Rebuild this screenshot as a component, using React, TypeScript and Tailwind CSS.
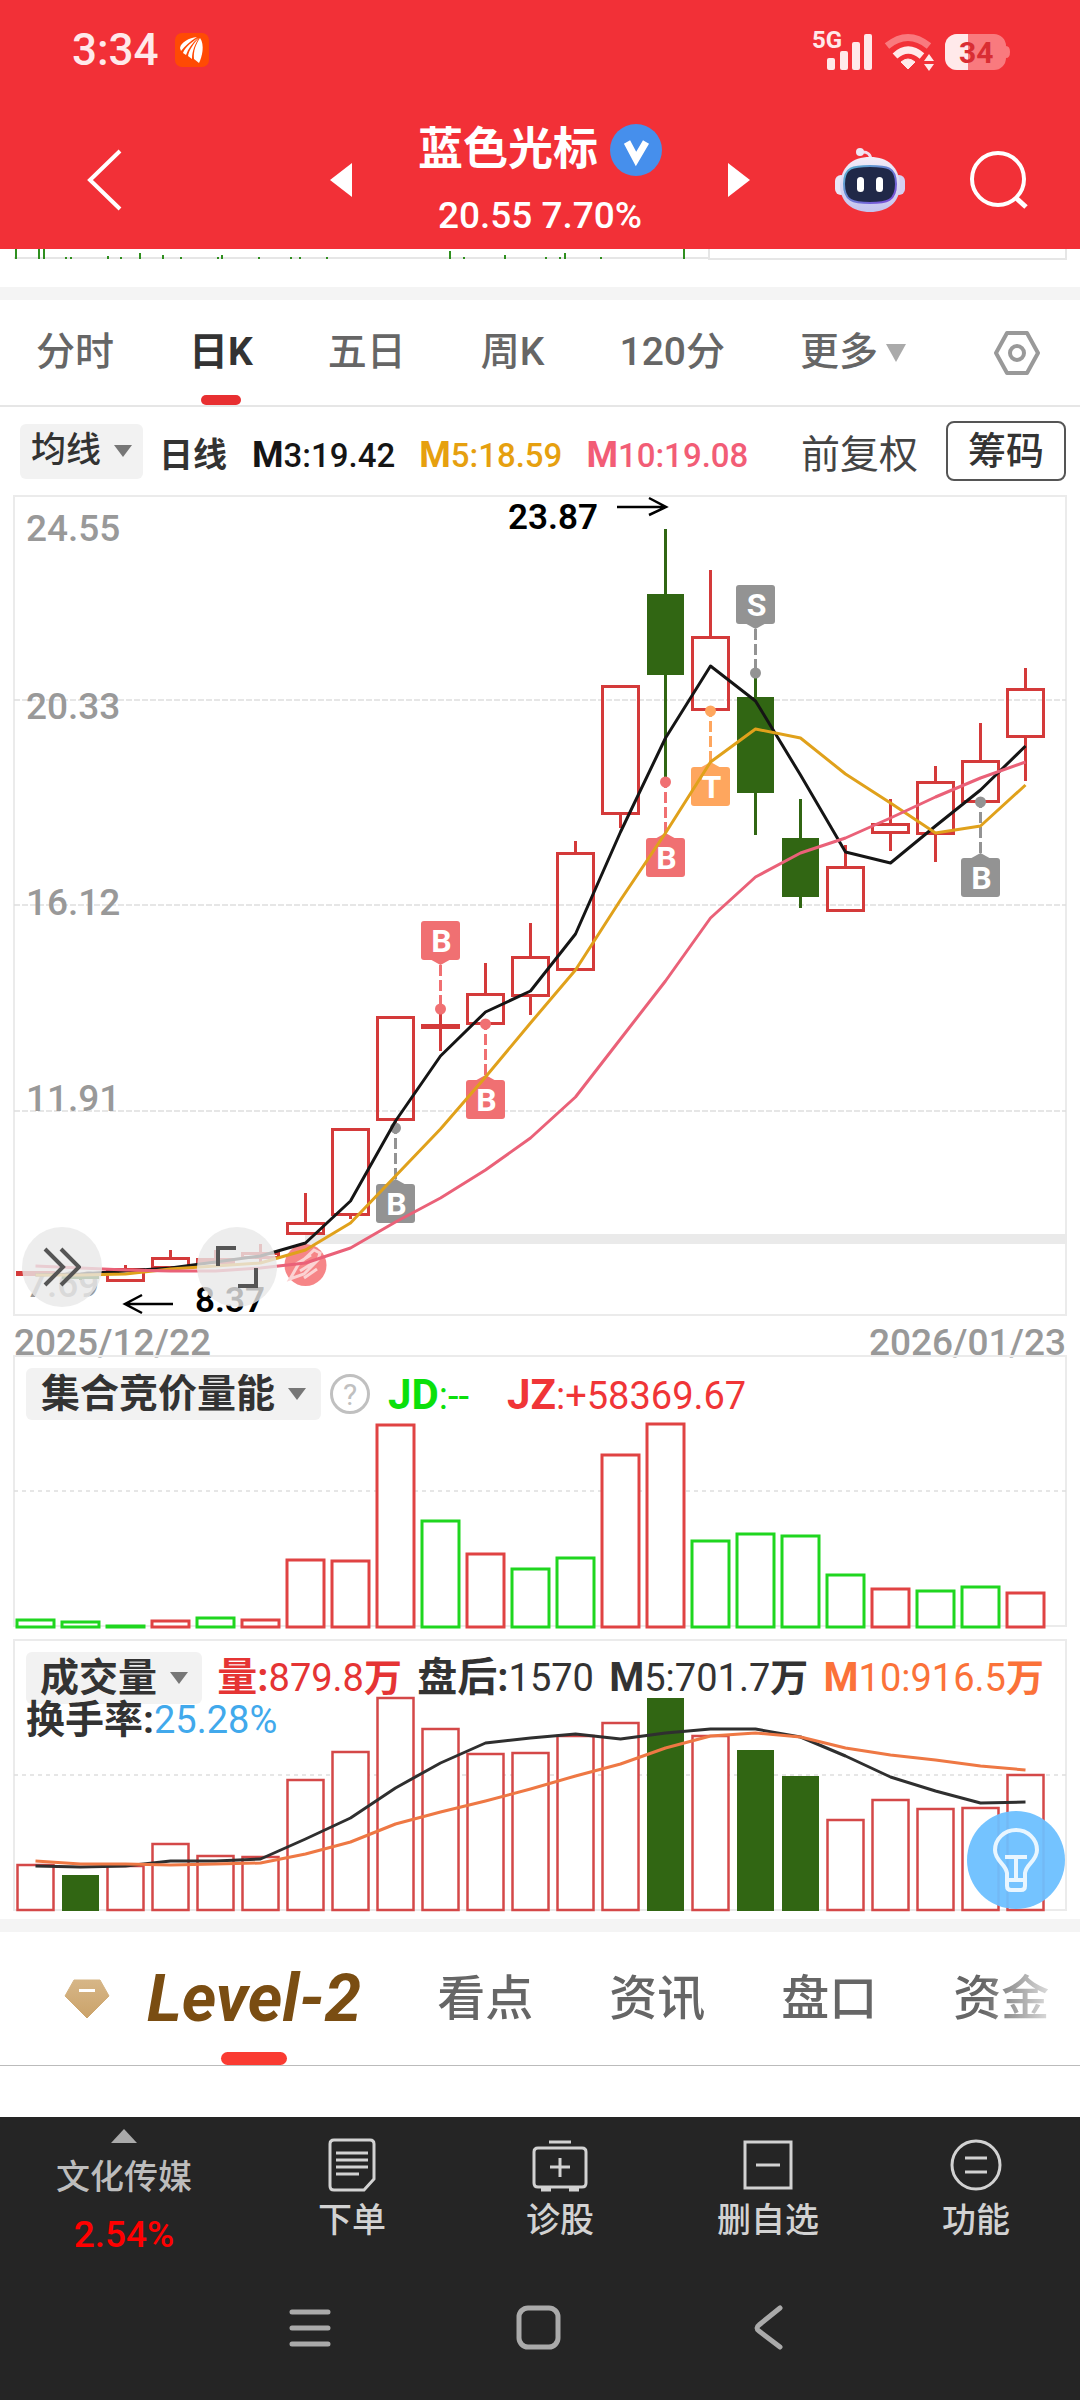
import { ReactNode, useState } from "react";
import clsx from "clsx";

type Candle = {
    ohlc: [number, number, number, number]; // wick top, body top, body bottom, wick bottom
    down?: boolean;
};

type Marker = {
    index: number;
    text: string;
    color: string;
    boxTop: number;
    dot: number;
};

const STEP = 45;
const RED = "#d43a3a";
const GREEN = "#316613";
const centerX = (index: number) => 35.5 + index * STEP;

const candles: Candle[] = [
    { ohlc: [776, 776, 781, 781] },
    { ohlc: [780, 781, 784, 785], down: true },
    { ohlc: [770, 773, 787, 787] },
    { ohlc: [755, 762, 774, 774] },
    { ohlc: [755, 763, 769, 769] },
    { ohlc: [749, 757, 764, 767] },
    { ohlc: [698, 727, 740, 740] },
    { ohlc: [633, 633, 721, 724] },
    { ohlc: [521, 521, 626, 634] },
    { ohlc: [514, 529, 534, 556] },
    { ohlc: [468, 498, 530, 530] },
    { ohlc: [428, 461, 502, 520] },
    { ohlc: [346, 357, 476, 476] },
    { ohlc: [190, 190, 320, 333] },
    { ohlc: [34, 99, 180, 286], down: true },
    { ohlc: [75, 141, 216, 216] },
    { ohlc: [177, 202, 298, 340], down: true },
    { ohlc: [304, 343, 402, 413], down: true },
    { ohlc: [350, 371, 417, 417] },
    { ohlc: [304, 328, 339, 356] },
    { ohlc: [271, 286, 340, 367] },
    { ohlc: [228, 265, 308, 308] },
    { ohlc: [173, 193, 243, 286] },
];

const ma3 = [780, 779, 776, 773, 767, 761, 748, 706, 626, 561, 517, 496, 439, 337, 243, 171, 206, 280, 357, 368, 331, 295, 251];
const ma5 = [780, 780, 779, 774, 771, 768, 755, 728, 681, 634, 582, 528, 475, 405, 338, 267, 234, 243, 279, 308, 338, 331, 290];
const ma10 = [771, 773, 775, 776, 776, 773, 768, 753, 727, 703, 675, 643, 602, 544, 486, 423, 382, 358, 343, 323, 302, 283, 267];

const markers: Marker[] = [
    { index: 8, text: "B", color: "#939393", boxTop: 689, dot: 633 },
    { index: 9, text: "B", color: "#f07072", boxTop: 426, dot: 514 },
    { index: 10, text: "B", color: "#f07072", boxTop: 585, dot: 529 },
    { index: 14, text: "B", color: "#f07072", boxTop: 343, dot: 287 },
    { index: 15, text: "T", color: "#fea65e", boxTop: 272, dot: 216 },
    { index: 16, text: "S", color: "#939393", boxTop: 90, dot: 178 },
    { index: 21, text: "B", color: "#939393", boxTop: 363, dot: 307 },
];

const priceLabels = [
    { text: "24.55", y: 46 },
    { text: "20.33", y: 224 },
    { text: "16.12", y: 420 },
    { text: "11.91", y: 616 },
    { text: "7.69", y: 802 },
];

const auctionTops = [265, 267, 271, 266, 263, 265, 205, 206, 70, 166, 199, 214, 203, 100, 69, 186, 179, 181, 220, 234, 236, 232, 238];
const auctionGreen = [0, 1, 2, 4, 9, 11, 12, 15, 16, 17, 18, 20, 21];

const volumeTops = [226, 236, 227, 205, 217, 218, 141, 113, 59, 90, 115, 114, 97, 84, 59, 97, 111, 137, 181, 161, 170, 169, 136];
const volumeDown = [1, 14, 16, 17];
const volumeMa5 = [227, 228, 227, 222, 222, 220, 200, 179, 149, 124, 104, 99, 95, 100, 94, 90, 90, 98, 117, 138, 152, 164, 163];
const volumeMa10 = [222, 225, 225, 226, 225, 224, 215, 203, 185, 173, 162, 150, 137, 125, 109, 97, 94, 98, 109, 116, 121, 127, 131];

// [x, height] of the ticks still visible under the header
const ticks = [
    [15, 10], [38, 10], [43, 10], [65, 2], [70, 2], [107, 3], [120, 2], [139, 6], [162, 4], [180, 2], [217, 2], [221, 4],
    [258, 2], [290, 2], [299, 2], [326, 2], [449, 8], [463, 2], [504, 4], [545, 2], [559, 2], [564, 6], [600, 2], [683, 10],
];

const toPoints = (values: number[]) => values.map((y, i) => `${centerX(i)},${y}`).join(" ");

function MaLine({ values, color }: { values: number[]; color: string }) {
    return <polyline points={toPoints(values)} fill="none" stroke={color} strokeWidth="3" strokeLinejoin="round" />;
}

function Frame({ bottom, grid, dash }: { bottom: number; grid: number[]; dash: string }) {
    return (
        <g fill="none" stroke="#ebebeb" strokeWidth="2">
            <rect x="14" y="1" width="1052" height={bottom - 1} />
            {grid.map((y) => (
                <line key={y} x1="14" x2="1066" y1={y} y2={y} strokeDasharray={dash} strokeWidth="1.5" stroke="#dedede" />
            ))}
        </g>
    );
}

function CandleShape({ candle, index }: { candle: Candle; index: number }) {
    const x = centerX(index);
    const [high, top, bottom, low] = candle.ohlc;
    if (candle.down) {
        return (
            <g fill={GREEN}>
                <rect x={x - 1.5} y={high} width="3" height={low - high} />
                <rect x={x - 18.5} y={top} width="37" height={bottom - top} />
            </g>
        );
    }
    const flat = bottom - top < 6;
    return (
        <g fill={RED}>
            <rect x={x - 1.5} y={high} width="3" height={top - high} />
            <rect x={x - 1.5} y={bottom} width="3" height={low - bottom} />
            {flat ? (
                <rect x={x - 19.5} y={top} width="39" height={bottom - top} />
            ) : (
                <rect x={x - 18} y={top + 1.5} width="36" height={bottom - top - 3} fill="none" stroke={RED} strokeWidth="3" />
            )}
        </g>
    );
}

function MarkerShape({ marker }: { marker: Marker }) {
    const x = centerX(marker.index);
    const above = marker.boxTop < marker.dot;
    const edge = above ? marker.boxTop + 39 : marker.boxTop;
    const tip = above ? edge + 5 : edge - 5;
    return (
        <g fill={marker.color}>
            <line x1={x} x2={x} y1={tip} y2={marker.dot} stroke={marker.color} strokeWidth="3" strokeDasharray="11 4" />
            <circle cx={x} cy={marker.dot} r="5.5" />
            <rect x={x - 19.5} y={marker.boxTop} width="39" height="39" rx="3" />
            <path d={`M${x - 9} ${edge}L${x} ${tip}L${x + 9} ${edge}Z`} />
            <text x={x + 1} y={marker.boxTop + 31} fill="#fff" fontSize="32" fontWeight="700" textAnchor="middle">
                {marker.text}
            </text>
        </g>
    );
}

function PriceChart() {
    return (
        <svg viewBox="0 0 1080 821" className="block w-full overflow-visible" role="img" aria-label="日K线图">
            <Frame bottom={820} grid={[205, 410, 616]} dash="6 2" />
            <rect x="305" y="739" width="762" height="10" fill="#eaeaea" />
            <g fill="#999" fontSize="37" fontWeight="500">
                {priceLabels.map((label) => (
                    <text key={label.text} x="26" y={label.y}>
                        {label.text}
                    </text>
                ))}
            </g>
            {candles.map((candle, i) => (
                <CandleShape key={i} candle={candle} index={i} />
            ))}
            {markers.map((marker) => (
                <MarkerShape key={marker.index} marker={marker} />
            ))}
            <g>
                <circle cx="305.5" cy="770" r="21" fill="#f68587" />
                <path d="M290 784l8-14 16-15 6 3-2 7-14 14zM296 769l15-9M300 776l16-10M304 783l13-9" fill="none" stroke="#fbd3d3" strokeWidth="3" />
            </g>
            <MaLine values={ma3} color="#151515" />
            <MaLine values={ma5} color="#e0a11b" />
            <MaLine values={ma10} color="#ea6178" />
            <g fill="none" stroke="#000" strokeWidth="2.5">
                <path d="M617 12H665M649 3L666 12L649 20" />
                <path d="M173 809H126M142 800L125 809L142 818" />
            </g>
            <g fill="#000" fontSize="35" fontWeight="600">
                <text x="508" y="34">23.87</text>
                <text x="195" y="817">8.37</text>
            </g>
        </svg>
    );
}

function AuctionChart() {
    return (
        <svg viewBox="0 0 1080 284" className="block w-full" role="img" aria-label="集合竞价量能">
            <Frame bottom={271} grid={[136]} dash="4 4" />
            {auctionTops.map((top, i) => (
                <rect
                    key={i}
                    x={centerX(i) - 18.5}
                    y={top}
                    width="37"
                    height={272 - top}
                    fill="#fff"
                    stroke={auctionGreen.includes(i) ? "#1fd61f" : "#e04343"}
                    strokeWidth="3"
                />
            ))}
        </svg>
    );
}

function VolumeChart() {
    return (
        <svg viewBox="0 0 1080 280" className="block w-full" role="img" aria-label="成交量">
            <Frame bottom={271} grid={[136]} dash="4 4" />
            {volumeTops.map((top, i) =>
                volumeDown.includes(i) ? (
                    <rect key={i} x={centerX(i) - 18.5} y={top} width="37" height={272 - top} fill={GREEN} />
                ) : (
                    <rect
                        key={i}
                        x={centerX(i) - 18}
                        y={top}
                        width="36"
                        height={271 - top}
                        fill="#fff"
                        stroke="#d44848"
                        strokeWidth="2.5"
                    />
                )
            )}
            <MaLine values={volumeMa5} color="#2f2f2f" />
            <MaLine values={volumeMa10} color="#ee7844" />
        </svg>
    );
}

function Dropdown({ label, bold, className }: { label: string; bold?: boolean; className?: string }) {
    return (
        <label className={clsx("flex shrink-0 items-center gap-3 rounded-md bg-[#f2f2f2] text-[#333]", className)}>
            <select aria-label={label} className={clsx("appearance-none bg-transparent outline-none", bold && "font-bold")}>
                <option>{label}</option>
            </select>
            <svg viewBox="0 0 18 12" className="h-3 w-[18px]" fill="#777">
                <path d="M0 0H18L9 12Z" />
            </svg>
        </label>
    );
}

function Value({ name, children, color, nameSize }: { name: string; children?: ReactNode; color: string; nameSize: string }) {
    return (
        <span className={clsx("shrink-0 whitespace-nowrap", color)}>
            <b className={nameSize}>{name}</b>
            {children}
        </span>
    );
}

function StatusBar() {
    return (
        <div className="flex h-[100px] items-center pr-[68px] pl-[72px] text-[#ffe9ea]">
            <span className="text-[44px] font-medium">3:34</span>
            <svg viewBox="0 0 34 34" className="ml-4 size-[34px]">
                <rect width="34" height="34" rx="7" fill="#ff4a04" />
                <g fill="#fff">
                    <path d="M22 4C14 5 6 9 5 15L6 18C10 13 15 8 22 4Z" />
                    <path d="M23 5C17 9 10 14 8 20L11 22C13 16 17 10 23 5Z" />
                    <path d="M24 5C19 10 14 17 13 23L17 26C17 18 20 11 24 5Z" />
                    <path d="M25 5C21 11 18 18 19 26L24 30C27 24 30 12 25 5Z" />
                </g>
            </svg>
            <svg viewBox="-4 -6 204 56" className="ml-auto h-14 w-[204px]" fill="currentColor">
                <text x="0" y="20" fontSize="24" fontWeight="700">
                    5G
                </text>
                <rect x="15" y="30" width="8" height="12" rx="2" />
                <rect x="28" y="23" width="8" height="19" rx="2" />
                <rect x="40" y="14" width="8" height="28" rx="2" />
                <rect x="52" y="6" width="8" height="36" rx="2" />
                <path d="M75 18Q96 1 117 18" fill="none" stroke="#f97a7e" strokeWidth="7" />
                <path d="M83 28Q96 16 110 28" fill="none" stroke="currentColor" strokeWidth="7" />
                <path d="M89 34Q96 28 103 34L96 41Z" stroke="currentColor" strokeWidth="1" />
                <path d="M112 33L117 26L122 33ZM112 36L117 43L122 36Z" />
                <path d="M145 6h37a12 12 0 0 1 12 12q4 0 4 6t-4 6a12 12 0 0 1-12 12h-37a12 12 0 0 1-12-12V18a12 12 0 0 1 12-12Z" fill="#f97a7e" />
                <path d="M156 6H145a12 12 0 0 0-12 12V30a12 12 0 0 0 12 12H156Z" />
                <text x="147" y="35" fontSize="30" fontWeight="700" fill="#d92d33">
                    34
                </text>
            </svg>
        </div>
    );
}

function RobotIcon() {
    return (
        <svg viewBox="0 0 70 66" className="h-[66px] w-[70px]">
            <defs>
                <linearGradient id="shell" x1="0" y1="0" x2="0" y2="1">
                    <stop offset="0" stopColor="#f3edf8" />
                    <stop offset="1" stopColor="#c3c3ee" />
                </linearGradient>
                <linearGradient id="rim" x1="0" y1="0" x2="1" y2="1">
                    <stop offset="0" stopColor="#59b5cf" />
                    <stop offset="1" stopColor="#7a45d8" />
                </linearGradient>
            </defs>
            <path d="M26 5q10-1 10 9" fill="none" stroke="#f3dcec" strokeWidth="3" />
            <circle cx="25" cy="5" r="4" fill="#eee6f4" />
            <rect x="0" y="28" width="12" height="20" rx="6" fill="#e9e6f7" />
            <rect x="58" y="28" width="12" height="20" rx="6" fill="#d5cff2" />
            <path d="M35 10C53 10 64 20 65 38C65 56 52 65 35 65S5 56 5 38C6 20 17 10 35 10Z" fill="url(#shell)" />
            <path d="M35 19C52 19 61 20 61 37S52 56 35 56S9 54 9 37S18 19 35 19Z" fill="#202848" stroke="url(#rim)" strokeWidth="2" />
            <rect x="22" y="30" width="7" height="15" rx="3.5" fill="#fff" />
            <rect x="41" y="30" width="7" height="15" rx="3.5" fill="#fff" />
        </svg>
    );
}

function StockHeader() {
    return (
        <header className="grid h-[149px] grid-cols-[1fr_420px_1fr] items-center pt-[10px] text-white">
            <div className="flex pl-[86px]">
                <button aria-label="返回">
                    <svg viewBox="0 0 36 62" className="h-[62px] w-9" fill="none" stroke="currentColor" strokeWidth="4">
                        <path d="M34 2L4 31L34 60" />
                    </svg>
                </button>
            </div>
            <div className="flex items-center justify-between">
                <button aria-label="上一只">
                    <svg viewBox="0 0 22 34" className="h-[34px] w-[22px]" fill="currentColor">
                        <path d="M22 0V34L0 17Z" />
                    </svg>
                </button>
                <div className="flex flex-col items-center">
                    <h1 className="flex items-center gap-3 text-[45px] leading-[52px] font-bold whitespace-nowrap">
                        蓝色光标
                        <svg viewBox="0 0 52 52" className="size-[52px]">
                            <circle cx="26" cy="26" r="26" fill="#468fec" />
                            <path d="M17 18L26 35L36 18" fill="none" stroke="#fff" strokeWidth="7" />
                        </svg>
                    </h1>
                    <p className="mt-5 text-[37px] leading-10 font-medium whitespace-nowrap">20.55 7.70%</p>
                </div>
                <button aria-label="下一只">
                    <svg viewBox="0 0 22 34" className="h-[34px] w-[22px]" fill="currentColor">
                        <path d="M0 0V34L22 17Z" />
                    </svg>
                </button>
            </div>
            <div className="flex items-center justify-end gap-[65px] pr-[52px]">
                <button aria-label="智能助手">
                    <RobotIcon />
                </button>
                <button aria-label="搜索">
                    <svg viewBox="0 0 58 58" className="size-[58px]" fill="none" stroke="currentColor" strokeWidth="4">
                        <circle cx="28" cy="28" r="26" />
                        <path d="M45 46L56 56" strokeWidth="5" />
                    </svg>
                </button>
            </div>
        </header>
    );
}

function TickStrip() {
    return (
        <svg viewBox="0 0 1080 38" className="block w-full">
            <rect x="14" y="8" width="695" height="2" fill="#e6e6e6" />
            <path d="M709 0V10H1066V0" fill="none" stroke="#e6e6e6" strokeWidth="2" />
            {ticks.map(([x, height]) => (
                <rect key={x} x={x} y={10 - height} width="2" height={height} fill="#2f8f1f" />
            ))}
        </svg>
    );
}

const periods = ["分时", "日K", "五日", "周K", "120分"];

function PeriodTabs() {
    const [active, setActive] = useState("日K");
    return (
        <nav className="flex h-[107px] items-stretch gap-[75px] border-b-2 border-[#e6e6e6] pr-[40px] pl-9 text-[39px] font-medium text-[#666]">
            {periods.map((period) => (
                <button
                    key={period}
                    onClick={() => setActive(period)}
                    className={clsx("relative whitespace-nowrap", active === period && "font-bold text-[#333]")}
                >
                    {period}
                    {active === period && (
                        <span className="absolute bottom-0 left-1/2 h-[10px] w-10 -translate-x-1/2 rounded-full bg-[#e82f31]" />
                    )}
                </button>
            ))}
            <button className="flex items-center gap-2 whitespace-nowrap" aria-haspopup="menu">
                更多
                <svg viewBox="0 0 20 18" className="h-[18px] w-5" fill="#aaa">
                    <path d="M0 0H20L10 18Z" />
                </svg>
            </button>
            <button aria-label="设置" className="ml-auto">
                <svg viewBox="0 0 46 44" className="h-11 w-[46px]" fill="none" stroke="#999" strokeWidth="4">
                    <path d="M13 2H33L44 22L33 42H13L2 22Z" strokeLinejoin="round" />
                    <circle cx="23" cy="22" r="7" />
                </svg>
            </button>
        </nav>
    );
}

function IndicatorBar() {
    return (
        <div className="flex h-[88px] items-center pr-[14px] pl-5 text-[33px] font-medium">
            <Dropdown label="均线" className="h-[55px] px-[11px] text-[35px]" />
            <div className="ml-4 flex grow items-center pt-2">
                <b className="text-[34px] text-[#333]">日线</b>
                <div className="ml-[25px] flex gap-6">
                    <Value name="M" nameSize="text-[36px]" color="text-[#151515]">3:19.42</Value>
                    <Value name="M" nameSize="text-[36px]" color="text-[#e6a00f]">5:18.59</Value>
                    <Value name="M" nameSize="text-[36px]" color="text-[#f25d76]">10:19.08</Value>
                </div>
                <button className="ml-auto text-[39px] font-normal whitespace-nowrap text-[#444]">前复权</button>
            </div>
            <button className="ml-7 h-[60px] rounded-lg border-2 border-[#555] px-5 text-[38px] whitespace-nowrap text-[#333]">筹码</button>
        </div>
    );
}

function PricePanel() {
    return (
        <section className="relative">
            <PriceChart />
            <button aria-label="展开" className="absolute bottom-[9px] left-[22px] flex size-20 items-center justify-center rounded-full bg-[#e8e8e8]/80">
                <svg viewBox="0 0 38 40" className="h-10 w-[38px]" fill="none" stroke="#555" strokeWidth="4">
                    <path d="M2 2L20 20L2 38M18 2L36 20L18 38" />
                </svg>
            </button>
            <button aria-label="全屏" className="absolute bottom-[9px] left-[197px] flex size-20 items-center justify-center rounded-full bg-[#e8e8e8]/80">
                <svg viewBox="0 0 42 42" className="size-[42px]" fill="none" stroke="#555" strokeWidth="4">
                    <path d="M2 20V2H20M40 22V40H22" />
                </svg>
            </button>
        </section>
    );
}

function AuctionPanel() {
    return (
        <section className="relative">
            <AuctionChart />
            <div className="absolute inset-x-0 top-[13px] flex h-[52px] items-center pl-[26px] text-[38px]">
                <Dropdown label="集合竞价量能" bold className="h-[52px] px-[15px] text-[39px]" />
                <button aria-label="说明" className="ml-[9px] flex size-10 items-center justify-center rounded-full border-3 border-[#c0c0c0] text-[30px] text-[#c0c0c0]">
                    ?
                </button>
                <span className="ml-[18px] flex gap-[38px]">
                    <Value name="JD" nameSize="text-[42px]" color="text-[#0be00b]">:--</Value>
                    <Value name="JZ" nameSize="text-[42px]" color="text-[#f03537]">:+58369.67</Value>
                </span>
            </div>
        </section>
    );
}

function VolumePanel() {
    return (
        <section className="relative">
            <VolumeChart />
            <div className="absolute inset-x-0 top-[13px] pr-[36px] pl-[26px] text-[38px] text-[#333]">
                <div className="flex h-[52px] items-center justify-between">
                    <Dropdown label="成交量" bold className="h-[52px] px-[14px] text-[39px]" />
                    <Value name="量:" nameSize="text-[40px]" color="text-[#e53434]">
                        879.8<b>万</b>
                    </Value>
                    <Value name="盘后:" nameSize="text-[40px]" color="text-[#333]">1570</Value>
                    <Value name="M" nameSize="text-[40px]" color="text-[#333]">
                        5:701.7<b>万</b>
                    </Value>
                    <Value name="M" nameSize="text-[40px]" color="text-[#fb7239]">
                        10:916.5<b>万</b>
                    </Value>
                </div>
                <p className="-mt-1 leading-10">
                    <b className="text-[39px]">换手率:</b>
                    <span className="text-[#41a9ec]">25.28%</span>
                </p>
            </div>
            <button aria-label="提示" className="absolute right-[15px] bottom-[10px] flex size-[98px] items-center justify-center rounded-full bg-[#6dc0ff]/95">
                <svg viewBox="0 0 46 64" className="h-16 w-[46px]" fill="none" stroke="#e9f6ff" strokeWidth="4">
                    <path d="M14 52V45C13 36 2 33 2 22A21 20 0 0 1 44 22C44 33 33 36 32 45V52ZM14 52V58Q14 62 18 62H28Q32 62 32 58V52M12 29H34M23 29V52" />
                </svg>
            </button>
        </section>
    );
}

function ContentTabs() {
    return (
        <div className="h-[134px] overflow-hidden border-b border-[#bbb]">
            <nav className="flex h-full gap-[76px] pl-16 text-[48px] text-[#666] [mask-image:linear-gradient(to_right,#000_91%,transparent_99%)]">
                <button className="relative flex shrink-0 items-center gap-[37px]">
                    <svg viewBox="0 0 46 40" className="h-10 w-[46px]">
                        <defs>
                            <linearGradient id="gem" x1="0" y1="0" x2="0" y2="1">
                                <stop offset="0" stopColor="#d6b687" />
                                <stop offset="1" stopColor="#cba36a" />
                            </linearGradient>
                        </defs>
                        <path d="M10 1H36L45 17L23 39L1 17Z" fill="url(#gem)" stroke="url(#gem)" strokeLinejoin="round" />
                        <rect x="15" y="10" width="16" height="3" fill="#fff" />
                    </svg>
                    <span className="relative flex h-full items-center text-[66px] font-bold text-[#7a4d12] italic">
                        Level-2
                        <span className="absolute bottom-0 left-1/2 h-[13px] w-[66px] -translate-x-1/2 rounded-full bg-[#fa3b32]" />
                    </span>
                </button>
                {["看点", "资讯", "盘口", "资金"].map((tab) => (
                    <button key={tab} className="shrink-0 font-medium">
                        {tab}
                    </button>
                ))}
            </nav>
        </div>
    );
}

function FooterButton({ label, children }: { label: string; children: ReactNode }) {
    return (
        <button className="flex flex-col items-center pt-5 text-[#d2d2d2]">
            <svg viewBox="0 0 56 56" className="size-14" fill="none" stroke="currentColor" strokeWidth="3">
                {children}
            </svg>
            <span className="mt-[7px] text-[34px] leading-10 font-medium whitespace-nowrap">{label}</span>
        </button>
    );
}

function Footer() {
    return (
        <footer className="h-[283px] bg-[#252525]">
            <div className="grid h-[142px] grid-cols-[248fr_208fr_208fr_208fr_208fr] items-start">
                <button className="flex flex-col items-center pt-3 text-[34px] leading-10 font-medium whitespace-nowrap text-[#bdbdbd]">
                    <svg viewBox="0 0 26 14" className="h-[14px] w-[26px]" fill="#aaa">
                        <path d="M0 14L13 0L26 14Z" />
                    </svg>
                    <span className="mt-[14px]">文化传媒</span>
                    <span className="mt-[18px] text-[37px] text-[#f00]">2.54%</span>
                </button>
                <FooterButton label="下单">
                    <path d="M10 3H46Q50 3 50 7V42L40 53H10Q6 53 6 49V7Q6 3 10 3ZM12 16H44M12 23H44M12 30H44M12 37H35" />
                </FooterButton>
                <FooterButton label="诊股">
                    <path d="M6 11H50Q54 11 54 15V46Q54 50 50 50H6Q2 50 2 46V15Q2 11 6 11ZM17 5H39M28 21V40M18 30H38M9 53H19M37 53H47" />
                </FooterButton>
                <FooterButton label="删自选">
                    <path d="M5 5H51V51H5ZM16 28H40" />
                </FooterButton>
                <FooterButton label="功能">
                    <circle cx="28" cy="28" r="24" />
                    <path d="M17 21H39M17 35H39" />
                </FooterButton>
            </div>
            <div className="flex h-[138px] items-center justify-center gap-[178px] text-[#aaa]">
                <button aria-label="最近任务">
                    <svg viewBox="0 0 50 50" className="size-[50px]" stroke="currentColor" strokeWidth="5" strokeLinecap="round">
                        <path d="M5 9H41M5 25H41M5 41H41" />
                    </svg>
                </button>
                <button aria-label="主页">
                    <svg viewBox="0 0 50 50" className="size-[50px]" fill="none" stroke="currentColor" strokeWidth="5">
                        <rect x="4" y="5" width="39" height="39" rx="9" />
                    </svg>
                </button>
                <button aria-label="后退">
                    <svg viewBox="0 0 50 50" className="size-[50px]" fill="none" stroke="currentColor" strokeWidth="5" strokeLinecap="round">
                        <path d="M37 5L16 22Q12 25 16 28L37 44" />
                    </svg>
                </button>
            </div>
        </footer>
    );
}

export default function App() {
    return (
        <div className="w-full bg-white font-['Roboto','Noto_Sans_CJK_SC',sans-serif]">
            <div className="bg-[#f23037]">
                <StatusBar />
                <StockHeader />
            </div>
            <main>
                <TickStrip />
                <div className="h-[13px] bg-[#f4f4f4]" />
                <PeriodTabs />
                <IndicatorBar />
                <PricePanel />
                <div className="flex h-[39px] items-center justify-between px-[14px] pt-[15px] text-[37px] font-medium text-[#999]">
                    <time>2025/12/22</time>
                    <time>2026/01/23</time>
                </div>
                <AuctionPanel />
                <VolumePanel />
                <div className="h-[13px] bg-[#f4f4f4]" />
                <ContentTabs />
                <div className="h-[51px]" />
            </main>
            <Footer />
        </div>
    );
}
